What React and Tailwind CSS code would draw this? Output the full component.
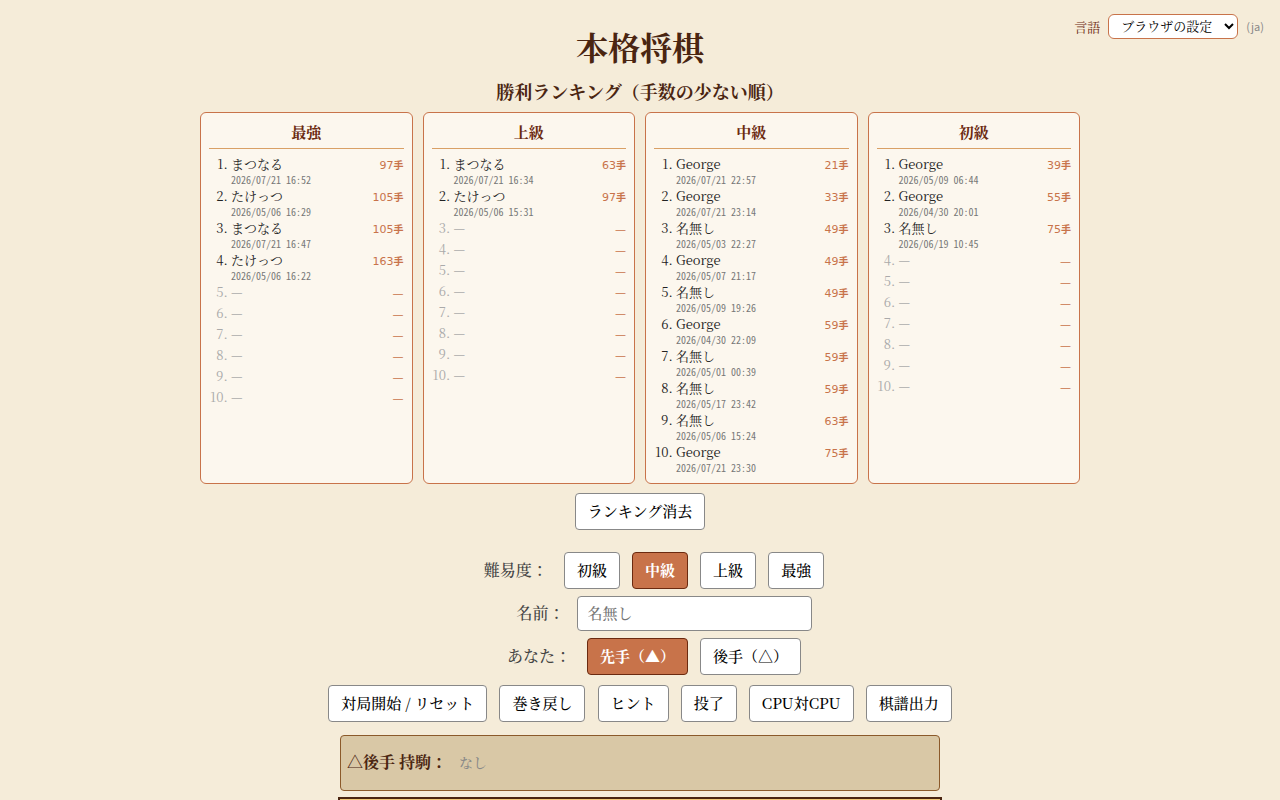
import { useState } from "react"

const EMPTY = Array(10).fill(null)

const rankings = [
  {
    title: "最強",
    rows: [
      ["まつなる", 97, "2026/07/21 16:52"],
      ["たけっつ", 105, "2026/05/06 16:29"],
      ["まつなる", 105, "2026/07/21 16:47"],
      ["たけっつ", 163, "2026/05/06 16:22"],
    ],
  },
  {
    title: "上級",
    rows: [
      ["まつなる", 63, "2026/07/21 16:34"],
      ["たけっつ", 97, "2026/05/06 15:31"],
    ],
  },
  {
    title: "中級",
    rows: [
      ["George", 21, "2026/07/21 22:57"],
      ["George", 33, "2026/07/21 23:14"],
      ["名無し", 49, "2026/05/03 22:27"],
      ["George", 49, "2026/05/07 21:17"],
      ["名無し", 49, "2026/05/09 19:26"],
      ["George", 59, "2026/04/30 22:09"],
      ["名無し", 59, "2026/05/01 00:39"],
      ["名無し", 59, "2026/05/17 23:42"],
      ["名無し", 63, "2026/05/06 15:24"],
      ["George", 75, "2026/07/21 23:30"],
    ],
  },
  {
    title: "初級",
    rows: [
      ["George", 39, "2026/05/09 06:44"],
      ["George", 55, "2026/04/30 20:01"],
      ["名無し", 75, "2026/06/19 10:45"],
    ],
  },
]

const levels = ["初級", "中級", "上級", "最強"]
const sides = ["先手（▲）", "後手（△）"]
const actions = ["対局開始 / リセット", "巻き戻し", "ヒント", "投了", "CPU対CPU", "棋譜出力"]

function Button({ active, children, ...props }) {
  return (
    <button
      type="button"
      className={
        "mx-1 rounded border px-3 pt-[6px] pb-2 text-[15px] leading-[21px] cursor-pointer " +
        (active
          ? "border-[#6b2a10] bg-[#c8734a] text-white font-bold"
          : "border-[#888888] bg-white text-black font-medium")
      }
      {...props}
    >
      {children}
    </button>
  )
}

function RankingCard({ title, rows }) {
  return (
    <section className="rounded-md border border-[#c8734a] bg-[#fcf7ee] px-2 pt-2 pb-[10px]">
      <h3 className="mb-1 border-b border-[#d9a066] pb-[6px] text-center text-[15px] leading-[21px] font-bold text-[#6b2a10]">
        {title}
      </h3>
      <ol className="list-decimal pl-[22px] text-[13px] leading-[21px] font-normal">
        {EMPTY.map((_, i) => {
          const row = rows[i]
          return (
            <li key={i} className={row ? "text-[#222222]" : "text-[#aaaaaa]"}>
              <div className="flex items-baseline justify-between">
                <span>{row ? row[0] : "—"}</span>
                <span className="font-['DejaVu_Sans','Noto_Sans_CJK_JP',sans-serif] text-[11px] leading-[14px] text-[#c8734a]">
                  {row ? (
                    <>
                      {row[1]}
                      <span className="text-[10px] font-bold">手</span>
                    </>
                  ) : (
                    "—"
                  )}
                </span>
              </div>
              {row && (
                <div className="font-['Noto_Sans_Mono_CJK_JP','Liberation_Mono',monospace] text-[10px] leading-[11px] text-[#777777]">
                  {row[2]}
                </div>
              )}
            </li>
          )
        })}
      </ol>
    </section>
  )
}

export default function App() {
  const [lang, setLang] = useState("auto")
  const [level, setLevel] = useState("中級")
  const [side, setSide] = useState("先手（▲）")
  const [name, setName] = useState("")

  return (
    <div
      lang="ja"
      className="relative h-screen overflow-hidden bg-[#f5ecd9] font-['Noto_Serif_CJK_JP','Noto_Serif_JP','Noto_Sans_CJK_JP',serif] font-medium text-[#444444]"
    >
      {/* Language picker */}
      <div className="absolute top-[14px] right-4 flex items-center gap-2 text-[13px] font-normal">
        <label htmlFor="lang" className="text-[#6b2a10]">言語</label>
        <select
          id="lang"
          value={lang}
          onChange={(e) => setLang(e.target.value)}
          className="h-[25px] rounded-md border border-[#c8734a] bg-white px-2 pb-[2px] text-[13px] text-black"
        >
          <option value="auto">ブラウザの設定</option>
          <option value="ja">日本語</option>
          <option value="en">English</option>
        </select>
        <span className="font-['Noto_Sans_CJK_JP',sans-serif] text-[11px] text-[#888888]">(ja)</span>
      </div>

      <main className="flex flex-col items-center">
        <h1 className="mt-6 text-[32px] leading-[44px] font-bold text-[#4a2511]">本格将棋</h1>

        {/* Rankings */}
        <h2 className="mt-[10px] text-lg leading-[26px] font-bold text-[#4a2511]">
          勝利ランキング（手数の少ない順）
        </h2>
        <div className="mt-2 grid w-full max-w-[880px] grid-cols-4 gap-[10px]">
          {rankings.map((r) => (
            <RankingCard key={r.title} title={r.title} rows={r.rows} />
          ))}
        </div>
        <div className="mt-[9px]">
          <Button>ランキング消去</Button>
        </div>

        {/* Settings */}
        <div className="mt-[22px]">
          <span className="mr-2 inline-block min-w-24 text-right">難易度：</span>{" "}
          {levels.map((l) => (
            <span key={l}>
              <Button active={l === level} onClick={() => setLevel(l)}>{l}</Button>{" "}
            </span>
          ))}
        </div>
        <div className="mt-[7px]">
          <label htmlFor="player" className="mr-2 inline-block min-w-24 text-right">名前：</label>{" "}
          <input
            id="player"
            type="text"
            value={name}
            onChange={(e) => setName(e.target.value)}
            placeholder="名無し"
            className="h-[35px] w-[235px] rounded border border-[#888888] bg-white px-[10px] pb-[2px] text-[15px] placeholder:text-[#757575]"
          />
        </div>
        <div className="mt-[7px]">
          <span className="mr-2 inline-block min-w-24 text-right">あなた：</span>{" "}
          {sides.map((s) => (
            <span key={s}>
              <Button active={s === side} onClick={() => setSide(s)}>{s}</Button>{" "}
            </span>
          ))}
        </div>
        <div className="mt-[10px]">
          {actions.map((a) => (
            <span key={a}>
              <Button>{a}</Button>{" "}
            </span>
          ))}
        </div>

        {/* Captured pieces */}
        <div className="mt-[13px] flex h-14 w-full max-w-[600px] items-center rounded border border-[#8b5a2b] bg-[#d9c8a6] px-[6px] pb-[2px]">
          <span className="font-bold text-[#4a2511]">△後手 持駒：</span>
          <span className="ml-3 text-sm text-[#888888]">なし</span>
        </div>

        {/* Board */}
        <div className="mt-[6px] h-[604px] w-full max-w-[604px] shrink-0 border-2 border-[#4a2511] bg-[#f0c878]" />
      </main>
    </div>
  )
}
